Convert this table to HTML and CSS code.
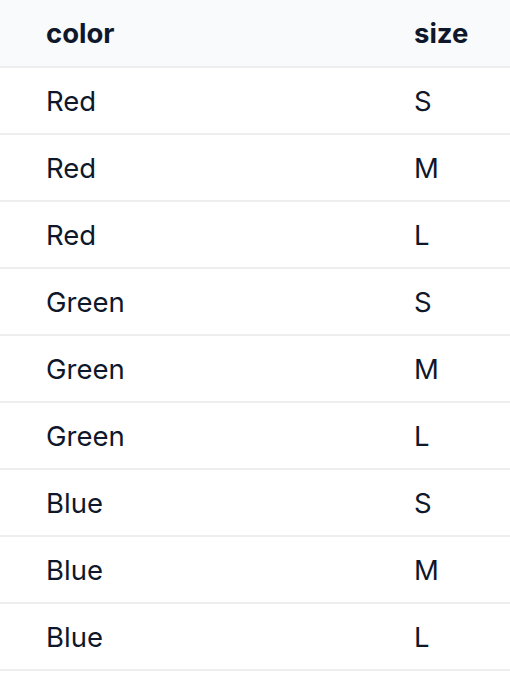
FILE: index.html
```html
<!DOCTYPE html>
<html>
<head>
<meta charset="utf-8">
<link rel="stylesheet" href="styles.css">
</head>
<body>
<table class="grid">
  <colgroup><col class="col1"><col class="col2"></colgroup>
  <thead>
    <tr><th class="c1">color</th><th class="c2">size</th></tr>
  </thead>
  <tbody>
    <tr><td class="c1">Red</td><td class="c2">S</td></tr>
    <tr><td class="c1">Red</td><td class="c2">M</td></tr>
    <tr><td class="c1">Red</td><td class="c2">L</td></tr>
    <tr><td class="c1">Green</td><td class="c2">S</td></tr>
    <tr><td class="c1">Green</td><td class="c2">M</td></tr>
    <tr><td class="c1">Green</td><td class="c2">L</td></tr>
    <tr><td class="c1">Blue</td><td class="c2">S</td></tr>
    <tr><td class="c1">Blue</td><td class="c2">M</td></tr>
    <tr><td class="c1">Blue</td><td class="c2">L</td></tr>
  </tbody>
</table>
</body>
</html>
```
FILE: styles.css
```css
html, body {
  margin: 0;
  padding: 0;
  background: #ffffff;
}
.grid {
  width: 100%;
  table-layout: fixed;
  border-collapse: collapse;
  font-family: Inter, "Noto Sans", sans-serif;
  font-size: 27.5px;
  color: #0f172a;
}
.col1 {
  width: 414px;
}
.grid th, .grid td {
  height: 65px;
  padding: 0;
  line-height: 40px;
  text-align: left;
  vertical-align: middle;
  border-bottom: 2px solid #eeeeee;
}
.grid th {
  height: 66px;
  font-weight: 700;
}
.grid thead tr {
  background: #f8fafc;
}
.grid td {
  font-weight: 400;
}
.grid .c1 {
  padding-left: 46px;
}
.grid .c2 {
  padding-left: 0;
}
```
